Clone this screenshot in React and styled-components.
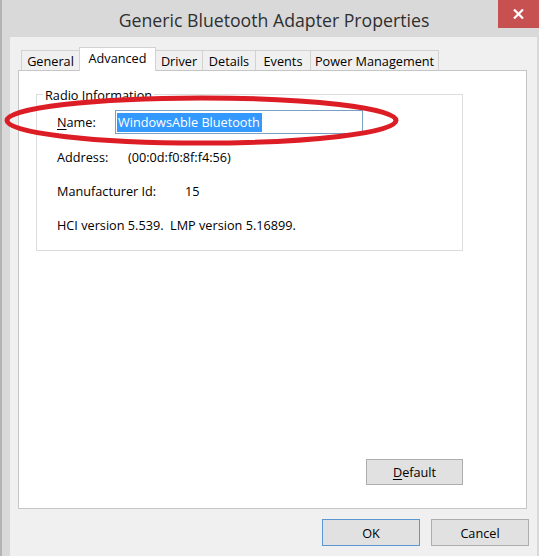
import React from 'react';
import styled, { createGlobalStyle } from 'styled-components';

const Global = createGlobalStyle`
  html, body { margin: 0; padding: 0; background: #d8d8d8; }
  body {
    width: 539px; height: 556px; overflow: hidden;
    font-family: "Open Sans", "Liberation Sans", sans-serif;
    -webkit-font-smoothing: antialiased;
  }
  * { box-sizing: border-box; }
`;

const Window = styled.div`
  position: relative;
  width: 539px;
  height: 556px;
  background: #d9d9d9;
  border-left: 2px solid #b3b3b3;
  display: flex;
  flex-direction: column;
`;

const TitleBar = styled.div`
  height: 37px;
  display: flex;
  align-items: flex-start;
  flex-shrink: 0;
`;

const Title = styled.div`
  flex: 1;
  padding-left: 48px;
  padding-top: 8px;
  text-align: center;
  font-size: 17.7px;
  line-height: 24px;
  color: #2f2f2f;
  white-space: nowrap;
`;

const CloseButton = styled.div`
  width: 41px;
  height: 28px;
  background: #c75050;
  display: flex;
  align-items: center;
  justify-content: center;
`;

const Body = styled.div`
  flex: 1;
  margin: 0 2px 0 8px;
  background: #f0f0f0;
  padding: 10px 8px 10px 8px;
  display: flex;
  flex-direction: column;
  min-height: 0;
`;

const TabStrip = styled.div`
  display: flex;
  align-items: flex-end;
  height: 24px;
  margin-bottom: -1px;
  padding-left: 3px;
`;

const Tab = styled.div`
  width: ${p => p.$w}px;
  height: ${p => (p.$active ? 24 : 21)}px;
  margin-right: -1px;
  border: 1px solid #d2d2d2;
  border-bottom: none;
  background: ${p => (p.$active ? '#ffffff' : '#f0f0f0')};
  font-size: 12.7px;
  line-height: 18px;
  color: #000;
  display: flex;
  justify-content: center;
  align-items: center;
  padding-bottom: ${p => (p.$active ? 4 : 1)}px;
  white-space: nowrap;
  position: ${p => (p.$active ? 'relative' : 'static')};
  z-index: ${p => (p.$active ? 2 : 'auto')};
`;

const Panel = styled.div`
  position: relative;
  z-index: 1;
  flex: 1;
  margin-right: 2px;
  background: #ffffff;
  border: 1px solid #c6c6c6;
  padding: 23px 63px 23px 17px;
  display: flex;
  flex-direction: column;
`;

const GroupBox = styled.div`
  position: relative;
  height: 157px;
  border: 1px solid #dcdcdc;
  padding: 15px 20px 0 20px;
  display: flex;
  flex-direction: column;
`;

const Legend = styled.span`
  position: absolute;
  top: -9px;
  left: 6px;
  padding: 0 2px;
  background: #ffffff;
  font-size: 12.7px;
  line-height: 18px;
  color: #000;
`;

const NameRow = styled.div`
  display: flex;
  align-items: center;
  height: 24px;
  margin-bottom: 6px;
`;

const InfoRow = styled.div`
  display: flex;
  align-items: center;
  height: 34px;
  font-size: 12.7px;
  color: #000;
  white-space: nowrap;
`;

const Label = styled.span`
  width: ${p => p.$w}px;
  flex-shrink: 0;
  font-size: 12.7px;
  color: #000;
`;

const Mnemonic = styled.span`
  text-decoration: underline;
  text-underline-offset: 2px;
`;

const TextBox = styled.div`
  width: 248px;
  height: 24px;
  border: 1px solid #7b9fc3;
  background: #ffffff;
  padding: 0 1px;
  display: flex;
  align-items: center;
`;

const Selection = styled.span`
  background: #3399ff;
  color: #ffffff;
  font-size: 12.7px;
  line-height: 19px;
  padding: 0 2px 0 1px;
  white-space: nowrap;
`;

const Button = styled.div`
  width: ${p => p.$w}px;
  height: ${p => p.$h}px;
  background: #e1e1e1;
  border: 1px solid ${p => (p.$default ? '#5b97d0' : '#adadad')};
  display: flex;
  align-items: center;
  justify-content: center;
  font-size: 12.7px;
  color: #000;
`;

const DefaultButton = styled(Button)`
  align-self: flex-end;
  margin-top: auto;
`;

const Footer = styled.div`
  display: flex;
  justify-content: flex-end;
  gap: 11px;
  margin-top: 10px;
`;

const Annotation = styled.svg`
  position: absolute;
  left: -2px;
  top: 0;
  pointer-events: none;
  z-index: 5;
`;

const tabs = [
  { label: 'General', w: 59 },
  { label: 'Advanced', w: 77, active: true },
  { label: 'Driver', w: 48 },
  { label: 'Details', w: 54 },
  { label: 'Events', w: 56 },
  { label: 'Power Management', w: 129 },
];

export default function App() {
  return (
    <>
      <Global />
      <Window>
        <TitleBar>
          <Title>Generic Bluetooth Adapter Properties</Title>
          <CloseButton>
            <svg width="11" height="10" viewBox="0 0 11 10">
              <path d="M1 0.5 L10 9.5 M10 0.5 L1 9.5" stroke="#ffffff" strokeWidth="2.2" />
            </svg>
          </CloseButton>
        </TitleBar>
        <Body>
          <TabStrip>
            {tabs.map(t => (
              <Tab key={t.label} $w={t.w} $active={t.active}>{t.label}</Tab>
            ))}
          </TabStrip>
          <Panel>
            <GroupBox>
              <Legend>Radio Information</Legend>
              <NameRow>
                <Label $w={58}><Mnemonic>N</Mnemonic>ame:</Label>
                <TextBox>
                  <Selection>WindowsAble Bluetooth</Selection>
                </TextBox>
              </NameRow>
              <InfoRow>
                <Label $w={71}>Address:</Label>
                (00:0d:f0:8f:f4:56)
              </InfoRow>
              <InfoRow>
                <Label $w={128}>Manufacturer Id:</Label>
                15
              </InfoRow>
              <InfoRow>HCI version 5.539.&nbsp;&nbsp;LMP version 5.16899.</InfoRow>
            </GroupBox>
            <DefaultButton $w={97} $h={26}><span><Mnemonic>D</Mnemonic>efault</span></DefaultButton>
          </Panel>
          <Footer>
            <Button $w={98} $h={27} $default>OK</Button>
            <Button $w={98} $h={27}>Cancel</Button>
          </Footer>
        </Body>
        <Annotation width="539" height="556" viewBox="0 0 539 556">
          <ellipse cx="201.5" cy="120.5" rx="194.5" ry="22.5" fill="none" stroke="#dc1d25" strokeWidth="5" />
        </Annotation>
      </Window>
    </>
  );
}
